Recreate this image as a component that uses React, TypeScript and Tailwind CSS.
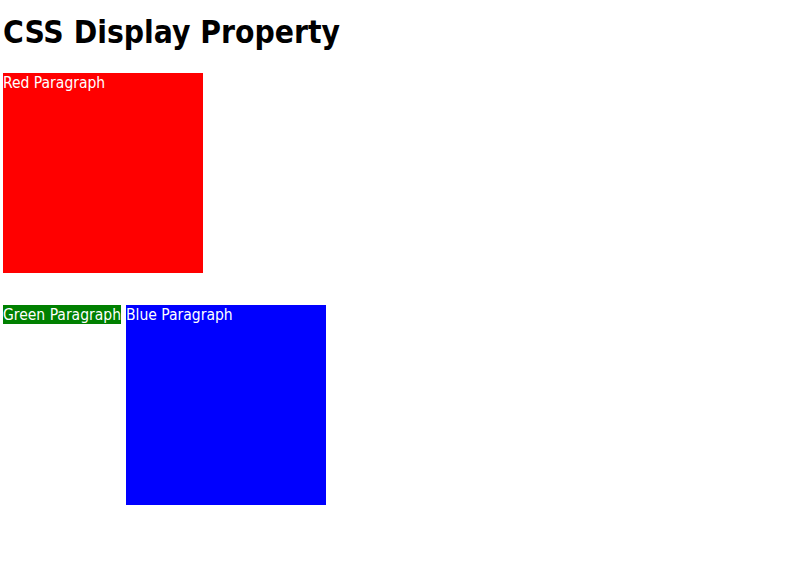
export default function App() {
  return (
    <div className="min-h-screen bg-white px-[3px] font-['DejaVu_Sans_Condensed','Liberation_Sans',sans-serif] text-black">
      <h1 className="pt-[12px] text-[31.5px] font-bold leading-[40px]">CSS Display Property</h1>

      <p className="mt-[21px] h-[200px] w-[200px] bg-[#ff0000] pt-px text-[15.5px] leading-[19px] text-white">
        Red Paragraph
      </p>

      <div className="mt-[32px] flex items-start gap-[5px]">
        <p className="h-[19px] whitespace-nowrap bg-[#008000] pt-px text-[15.5px] leading-[19px] text-white">
          Green Paragraph
        </p>
        <p className="h-[200px] w-[200px] bg-[#0000ff] pt-px text-[15.5px] leading-[19px] text-white">
          Blue Paragraph
        </p>
      </div>
    </div>
  )
}
